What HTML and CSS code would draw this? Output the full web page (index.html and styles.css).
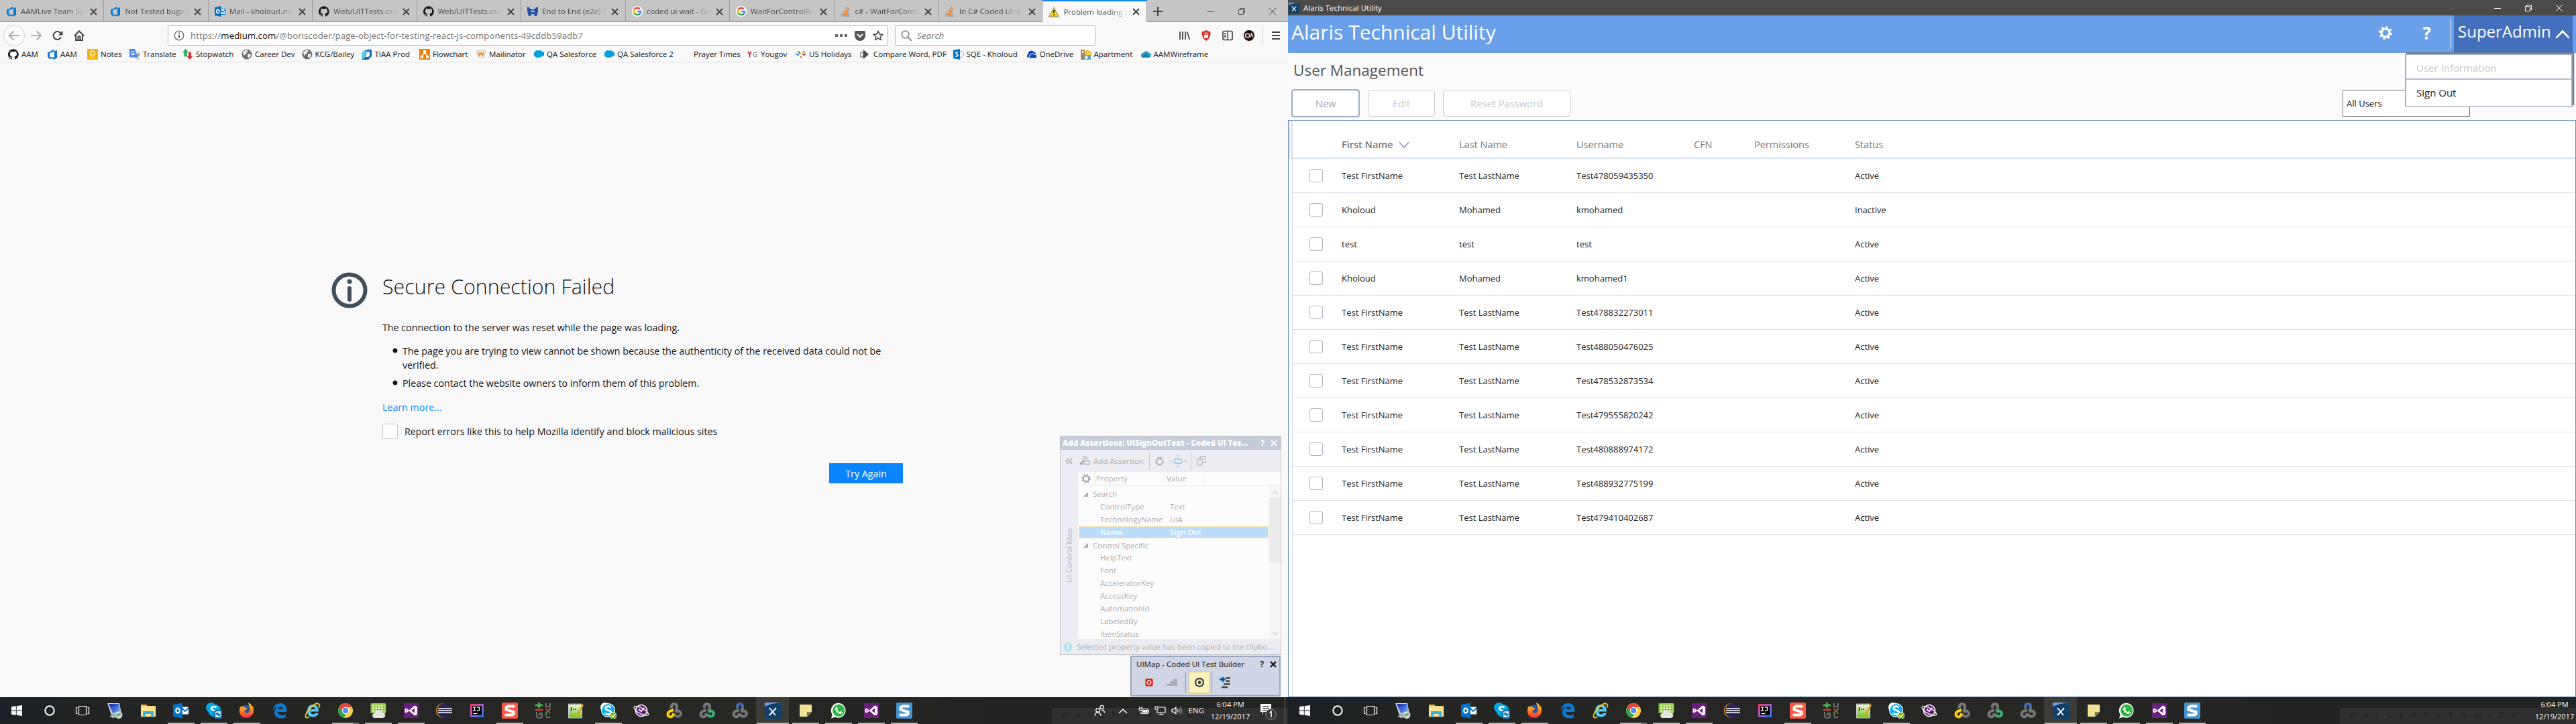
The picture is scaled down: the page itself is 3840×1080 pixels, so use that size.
FILE: index.html
```html
<!DOCTYPE html>
<html lang="en">
<head>
<meta charset="utf-8">
<title>Desktop</title>
<link rel="stylesheet" href="styles.css">
</head>
<body>
<svg class="defs" width="0" height="0">
  <defs>
    <linearGradient id="ff" x1="0" y1="0" x2="0" y2="1"><stop offset="0" stop-color="#ffdf3a"/><stop offset=".5" stop-color="#ff8a16"/><stop offset="1" stop-color="#f0244c"/></linearGradient>
    <linearGradient id="ij" x1="0" y1="0" x2="1" y2="1"><stop offset="0" stop-color="#fe2d6b"/><stop offset=".5" stop-color="#a05bd0"/><stop offset="1" stop-color="#087cfa"/></linearGradient>
    <linearGradient id="scr" x1="0" y1="0" x2="1" y2="1"><stop offset="0" stop-color="#0b25a8"/><stop offset="1" stop-color="#7db5ff"/></linearGradient>
    <linearGradient id="grn" x1="0" y1="0" x2="0" y2="1"><stop offset="0" stop-color="#f7fbe8"/><stop offset="1" stop-color="#6fbf1a"/></linearGradient>
    <!-- 16px icons -->
    <symbol id="vsts" viewBox="0 0 16 16"><path fill="#0a78d4" d="M1 5 4 4.500 10 .5V3l5-1v11.500L11 15.500 5 14l0 2L1 12V5zM4 6v6l7 1V3.500L6 5.500z"/></symbol>
    <symbol id="outlook" viewBox="0 0 16 16"><path fill="#fff" stroke="#0072c6" d="M8 4.500h7.500v8H8z"/><path fill="none" stroke="#0072c6" stroke-width="1.300" d="m8.500 5.500 3.500 4 3.500-4"/><path fill="#0072c6" d="M0 2 9.500 0v16L0 14z"/><ellipse cx="4.700" cy="8" rx="2" ry="2.600" fill="none" stroke="#fff" stroke-width="1.500"/></symbol>
    <symbol id="github" viewBox="0 0 16 16"><path fill="#191717" d="M8 .2a8 8 0 0 0-2.500 15.600c.4 0 .5-.2.500-.4v-1.500c-2.200.5-2.700-1-2.700-1-.4-.9-.9-1.200-.9-1.200-.7-.5 0-.5 0-.5.8.1 1.200.8 1.200.8.7 1.300 1.900.9 2.400.7 0-.5.3-.9.500-1.100-1.800-.2-3.600-.9-3.600-4 0-.9.300-1.600.8-2.100-.1-.2-.4-1 .1-2.100 0 0 .7-.2 2.200.8a7.700 7.700 0 0 1 4 0c1.500-1 2.200-.8 2.200-.8.4 1.100.2 1.900.1 2.100.5.6.8 1.300.8 2.100 0 3.100-1.900 3.700-3.700 4 .3.200.6.700.6 1.500v2.200c0 .2.100.5.500.4A8 8 0 0 0 8 .2z"/></symbol>
    <symbol id="moth" viewBox="0 0 16 16"><path fill="#2d55a8" d="M0 1 3 2l2.500 3h5L13 2l3-1v7l-2 7h-3l-1.500-3h-3L5 15H2L0 8z"/><path fill="#9dc0f0" d="m6 6 2 2 2-2 1 3H5z"/><path fill="#24356b" d="M2 5h2v3H2zm10 0h2v3h-2z"/></symbol>
    <symbol id="google" viewBox="0 0 16 16"><circle cx="8" cy="8" r="8" fill="#fff"/><g fill="none" stroke-width="2.600"><path stroke="#ea4335" d="M3.600 5.500A5 5 0 0 1 11.700 4.500"/><path stroke="#fbbc05" d="M3.600 10.500a5 5 0 0 1 0-5"/><path stroke="#34a853" d="M3.600 10.500a5 5 0 0 0 7.900 1.100"/><path stroke="#4285f4" d="M8 8h5a5 5 0 0 1-1.600 3.700"/></g></symbol>
    <symbol id="so" viewBox="0 0 16 16"><path fill="none" stroke="#9a9a9a" stroke-width="1.300" d="M2 10v5h10v-5"/><path stroke="#f48024" stroke-width="1.500" d="M4 12.700h6.200M4.200 10.300l6.100.7M5 7.500l5.700 2M6.800 4.600l4.800 3.700M9.500 1.500l3.200 5"/></symbol>
    <symbol id="warn" viewBox="0 0 16 16"><path fill="#f7d61c" stroke="#77797c" d="M8 1 15.300 15H.7z" stroke-linejoin="round"/><path fill="#222" d="M7 5h2l-.4 5H7.400zM7.100 11.500h1.800v1.800H7.100z"/></symbol>
    <symbol id="notes" viewBox="0 0 16 16"><path fill="#f5b50f" d="M0 0h16v16H0z"/><path fill="none" stroke="#fff" stroke-width="1.200" d="M6.500 10.500V9.300a3.400 3.400 0 1 1 3 0v1.200zM6.500 12.500h3"/></symbol>
    <symbol id="translate" viewBox="0 0 16 16"><path fill="#dcdcdc" d="M6 4h10v12H9z"/><path fill="#4b86f0" d="M0 0h8l4 12.500H0z"/><path fill="none" stroke="#fff" stroke-width="1.200" d="M7 4.500a2.500 2.500 0 1 0 .5 2H5"/><path stroke="#667" d="M10 8h5m-4 5 3-5"/></symbol>
    <symbol id="stopwatch" viewBox="0 0 16 16"><path fill="#23c552" stroke="#16873a" stroke-width=".5" d="m4.500 0 4 5H6.500v6h-4V5H.5z"/><path fill="#e02b3c" d="M9 5h4v6h2.500L11 16l-4.500-5H9z"/></symbol>
    <symbol id="globe" viewBox="0 0 16 16"><circle cx="8" cy="8" r="7.500" fill="#6b6b6b"/><path fill="#f2f2f2" d="M2 6c2-4 5-5 7-4l1 2-3 1 1 2-3 1-1 3zM9 8l4-1 1 3-3 4-2-2zM12 3l2 2h-2z"/></symbol>
    <symbol id="tiaa" viewBox="0 0 16 16"><path fill="#0b66b5" d="M5 1h10v10l-5 5H0l5-4z"/><path fill="#62c4ec" d="M5 1h3L5 13l-5 3V6z"/><path fill="#fff" d="M8 4h4v6l-2 2H6z"/></symbol>
    <symbol id="flow" viewBox="0 0 16 16"><path fill="#ee8109" d="M0 0h16v16H0z"/><path stroke="#fff" stroke-width="1.400" d="m8 5-4 6m4-6 4 6"/><path fill="#fff" d="M6 2h4v4H6zM2 10h4v4H2zm8 0h4v4h-4z"/></symbol>
    <symbol id="mailin" viewBox="0 0 16 16"><path fill="#fff" stroke="#c5ccd5" d="M1.500 2.500h13L13 13H3z"/><path fill="none" stroke="#e68a2e" stroke-width="2" d="m4 4 1.500 6L8 6l2.500 4L12 4"/></symbol>
    <symbol id="sf" viewBox="0 0 16 16"><path fill="#0aa0dd" d="M3 4a3 3 0 0 1 5-1 3 3 0 0 1 5 1 3.500 3.500 0 0 1 0 7 3 3 0 0 1-4 1 3 3 0 0 1-5 0A3 3 0 0 1 1 8a3 3 0 0 1 2-4z"/></symbol>
    <symbol id="blank" viewBox="0 0 16 16"></symbol>
    <symbol id="yg" viewBox="0 0 16 16"><path fill="#fff" d="M0 0h16v16H0z"/><path fill="none" stroke="#d8222c" stroke-width="1.800" d="m1 4 2.500 4L6 4M3.500 8v4.500"/><path fill="none" stroke="#9a9a9a" stroke-width="1.500" d="M14 5.500A3 3.500 0 1 0 14 11V8.500h-2"/></symbol>
    <symbol id="hol" viewBox="0 0 16 16"><path fill="#fff" d="M0 0h16v16H0z"/><g stroke-width="2.400" stroke-linecap="round"><path stroke="#e2483d" d="m8 12 .1 0M12 4l.1.100"/><path stroke="#f4b321" d="m9.500 7.500 3.500-3"/><path stroke="#4cae4f" d="m6.500 7-2-3"/><path stroke="#3a8de0" d="M1.500 7.500 4 9"/><path stroke="#8b49b5" d="m12 9 2-1"/></g></symbol>
    <symbol id="cmp" viewBox="0 0 16 16"><path fill="#4a4a4a" d="M5 1l8 7-8 7z"/><path fill="#fff" stroke="#4a4a4a" d="M1 5h4v7H1z"/></symbol>
    <symbol id="sp" viewBox="0 0 16 16"><circle cx="11" cy="8" r="4.500" fill="none" stroke="#6fb1e4"/><path fill="#0072c6" d="M0 2 10 0v16L0 14z"/><path fill="none" stroke="#fff" stroke-width="1.500" d="M7 5.500C5 4.500 3.500 5.500 4 6.800s3 1.300 3 2.700-2 2-3.800 1"/></symbol>
    <symbol id="od" viewBox="0 0 16 16"><path fill="#094ab2" d="M2 13a3 3 0 0 1 .5-5A5 5 0 0 1 11 4a4 4 0 0 1 3 4 3 3 0 0 1-1 5.500z"/><path stroke="#fff" fill="#094ab2" d="M6.500 14a2.500 2.500 0 0 1-.2-5 3.200 3.200 0 0 1 6-.5 2.800 2.800 0 0 1 1.200 5.500z"/></symbol>
    <symbol id="apt" viewBox="0 0 16 16"><path fill="#a8895b" d="M0 1h6v15H0z"/><path fill="#f2c230" d="M6 4l4-3 6 4v5H6z"/><path fill="#56acc4" d="M5 9h10v7H5z"/><path fill="#fff" d="M2 3h2v3H2zm5 7h3v5H7zm5-4h2v2h-2z"/></symbol>
    <symbol id="wire" viewBox="0 0 16 16"><path fill="#2fa3b8" d="M1 9a3 3 0 0 1 3-3 5 5 0 0 1 9 0 3.500 3.500 0 0 1-1 7H4a3.500 3.500 0 0 1-3-4z"/><path fill="#1b7cab" d="M2 12 8 6l6 6z"/></symbol>
    <symbol id="gear" viewBox="0 0 20 20"><g fill="none" stroke="currentColor"><circle cx="10" cy="10" r="6" stroke-width="3.200"/><circle cx="10" cy="10" r="8.600" stroke-width="2.600" stroke-dasharray="3.300 3.454"/></g></symbol>
    <symbol id="target" viewBox="0 0 16 16"><circle cx="8" cy="8" r="6" fill="none" stroke="#424242" stroke-width="2.300"/><circle cx="8" cy="8" r="2.400" fill="#424242"/></symbol>
    <!-- taskbar icons -->
    <symbol id="t-win" viewBox="0 0 24 24"><path fill="#fff" d="m4 6.300 6.800-1v6.200H4zM11.700 5.200 20 4v7.500h-8.300zM4 12.400h6.800v6.300L4 17.700zm7.700 0H20V20l-8.300-1.200z"/></symbol>
    <symbol id="t-cort" viewBox="0 0 24 24"><circle cx="12" cy="12" r="6.700" fill="none" stroke="#fff" stroke-width="2"/></symbol>
    <symbol id="t-view" viewBox="0 0 24 24"><path fill="none" stroke="#fff" stroke-width="1.200" d="M6.500 5.500h11v13h-11zM4.500 7.500h-2v9h2M19.500 7.500h2v9h-2"/></symbol>
    <symbol id="t-rdp" viewBox="0 0 24 24"><path fill="#d5d9df" d="M0 1h18l3 16-15 1z"/><path fill="url(#scr)" d="m2 2 15 0 2.500 13-11.500 1z"/><path fill="#bfc3c8" d="M3 20l7-2 3 4-5 1z"/><circle cx="17" cy="18.500" r="5.500" fill="#d7d9da"/><path fill="none" stroke="#3ca03c" stroke-width="1.400" d="m13.500 17 3 2-2 2.500m5.500-6-3 2 3 2"/></symbol>
    <symbol id="t-exp" viewBox="0 0 24 24"><path fill="#e9b64d" d="M1 3h8l2 2h12v5H1z"/><path fill="#ffe391" d="M1 5.500h22V21H1z"/><path fill="#36b0e8" d="M4 13h16v9h-4v-5H8v5H4z"/></symbol>
    <symbol id="t-out" viewBox="0 0 24 24"><path fill="#fff" d="M13 6.500h10v11H13z"/><path fill="none" stroke="#0072c6" stroke-width="1.800" d="m13 8 5 5 5.500-5.500"/><path fill="#0072c6" d="M0 3 14 .5v23L0 21z"/><ellipse cx="7" cy="12" rx="2.800" ry="3.500" fill="none" stroke="#fff" stroke-width="2.100"/></symbol>
    <symbol id="t-skb" viewBox="0 0 24 24"><circle cx="7.500" cy="7.500" r="7.500" fill="#00a8e8"/><circle cx="13" cy="12" r="9.500" fill="#00a8e8"/><path fill="none" stroke="#fff" stroke-width="2.600" d="M15.500 7.500C13 5 8 6 8 9s8 2.500 8 6"/><circle cx="18" cy="17.500" r="7.500" fill="#0d7ab8"/><path fill="none" stroke="#fff" stroke-width="1.400" d="M14 16.500c1-3 5-4 7-1V13m0 2.500h-3M22 18.500c-1 3-5 4-7 1V22m0-2.500h3"/></symbol>
    <symbol id="t-ff" viewBox="0 0 24 24"><circle cx="12" cy="12.500" r="9" fill="#2756a8"/><path fill="url(#ff)" d="M3 5 5 7l2-3 1 3 4 1-1 3-3 1 1 3c3 2 6 0 7-2 2-5-1-8-2-13 4 2 5 4 5.500 6l1.500-1c3 8 0 18-10 18C2 23-2 13 3 5z"/></symbol>
    <symbol id="t-edge" viewBox="0 0 24 24"><path fill="#0a78d7" d="M1.500 11C3 4 8 1 13 1c6 0 9.500 5 9.500 10v3H9c0 5 7 6.500 12 3.500V22c-7 3.500-17 1-17-8 0-4 3-7 6-8-3 0-6 1.500-8.500 5zM9.300 10h7.200c0-5-6.500-5-7.200 0z"/></symbol>
    <symbol id="t-ie" viewBox="0 0 24 24"><path fill="#55c7f5" d="M12 3c6 0 9 4 9 10.500H9c0 4.500 6 5 7.300 2.200H21c-3 8.500-17 8-17-3C4 7 7 3 12 3zM9 10h7.200C16 6 9.300 6 9 10z"/><path fill="none" stroke="#f5c518" stroke-width="1.900" d="M7 21c-4 3-6.500 2-5-3C4 11 16-1 21 2c2 1 1.500 3.500.5 5.500"/></symbol>
    <symbol id="t-chr" viewBox="0 0 24 24"><circle cx="12" cy="12" r="11" fill="#fcd04b"/><path fill="#df4a3c" d="M2.500 6.500A11 11 0 0 1 21.800 7H12l-5 7z"/><path fill="#2ba24c" d="M2.500 6.500 8 15.500l4 1.500-2 5.900A11 11 0 0 1 2.500 6.500z"/><circle cx="12" cy="12" r="5.200" fill="#fff"/><circle cx="12" cy="12" r="4.100" fill="#4a8af4"/></symbol>
    <symbol id="t-cloud" viewBox="0 0 24 24"><rect x=".5" y="1" width="23" height="15" rx="1.500" fill="#8cc63f"/><path stroke="#f4fbe4" stroke-width="2.600" stroke-dasharray="2.700 1.500" d="M3.300 4.500h18M3.300 8.500h18M3.300 12.500h18"/><path fill="#e6e6e6" d="M7 23a3.500 3.500 0 0 1-.5-7 5.500 5.500 0 0 1 10.500-1 4 4 0 0 1 2 8z"/></symbol>
    <symbol id="t-vs" viewBox="0 0 24 24"><path fill="#68217a" d="M1 1h22v22H1z"/><path fill="#fff" d="M17 4.500 9 11.500 4.500 8.500 2.500 9.500v5l2 1 4.500-3 8 7 4-2v-11zM4.500 10.500 6.500 12l-2 1.800zM17 8.500v7L12 12z"/></symbol>
    <symbol id="t-ecl" viewBox="0 0 24 24"><circle cx="11" cy="12" r="11" fill="#f7941e"/><circle cx="12.500" cy="12" r="11" fill="#262626"/><circle cx="13.500" cy="12" r="10.500" fill="#2c2255"/><path stroke="#fff" stroke-width="1.600" d="M3 9h21M3 12h21M3 15h21"/></symbol>
    <symbol id="t-ij" viewBox="0 0 24 24"><path fill="url(#ij)" d="M2 2h20v20H2z"/><path fill="#000" d="M5 5h14v14H5z"/><path fill="none" stroke="#fff" stroke-width="1.300" d="M6.500 7h3.500m-1.750 0v5M6.500 12h3.500M12 7h3.500v4c0 1.500-2 1.700-3.500.6M6.500 16.500h6"/></symbol>
    <symbol id="t-snag" viewBox="0 0 24 24"><rect width="24" height="24" rx="2" fill="#ff5545"/><path fill="none" stroke="#fff" stroke-width="4" d="M19.500 5.500H9l-2.500 2v3L17.500 14v3L15 18.500H4.500"/></symbol>
    <symbol id="t-snagb" viewBox="0 0 24 24"><rect width="24" height="24" rx="2" fill="#4595d1"/><path fill="none" stroke="#fff" stroke-width="4" d="M19.500 5.500H9l-2.500 2v3L17.500 14v3L15 18.500H4.500"/></symbol>
    <symbol id="t-git" viewBox="0 0 24 24"><path stroke="#4caf50" stroke-width="3" d="M6.500 0v8M1 4h11"/><path stroke="#d23c32" stroke-width="2.400" d="M1 11h11"/><path fill="none" stroke="#727272" stroke-width="2" d="M3 14v6c0 4 8 4 8 0v-4H7v4M17 1v5h6V1m-6 21h6m-6-7v5"/><path fill="none" stroke="#4caf50" stroke-width="1.600" d="M17 17c0-5 6-4 6-9"/><path fill="none" stroke="#d23c32" stroke-width="1.600" d="M17 8c0 5 6 4 6 9"/></symbol>
    <symbol id="t-np" viewBox="0 0 24 24"><path fill="url(#grn)" stroke="#ccc" d="M1.500 2h20v21h-20z"/><path stroke="#555" stroke-width="1.800" stroke-dasharray="1.200 1" d="M2 2h20"/><path stroke="#222" stroke-width="1.500" d="M5.500 7v6M8 10h2m1 0h2"/><path stroke="#e89a1c" stroke-width="2.600" d="M23 3 15 18"/></symbol>
    <symbol id="t-sky" viewBox="0 0 24 24"><circle cx="7" cy="7" r="7" fill="#fff"/><circle cx="11.500" cy="11.500" r="10.500" fill="#fff"/><circle cx="11.500" cy="11.500" r="9.300" fill="#00aff0"/><path fill="none" stroke="#fff" stroke-width="2.800" d="M15.500 7.500C13 4.500 7.500 5.500 7.500 8.700s8.200 2.300 8.200 6-6.500 4-8.700.8"/><circle cx="19" cy="19.500" r="5" fill="#76b900" stroke="#fff"/><path fill="none" stroke="#fff" stroke-width="1.500" d="m16.500 19.500 2 2 3-4"/></symbol>
    <symbol id="t-purple" viewBox="0 0 24 24"><circle cx="12" cy="12" r="8.500" fill="#68217a" stroke="#fff" stroke-width="1.600"/><ellipse cx="12" cy="12.500" rx="12" ry="4.200" fill="none" stroke="#fff" stroke-width="1.300" transform="rotate(28 12 12)"/><path fill="none" stroke="#fff" stroke-width="1.700" d="m8 10 4 3 4-5"/></symbol>
    <symbol id="t-link" viewBox="0 0 24 24"><g fill="none" stroke-width="4"><path stroke="#777" d="M8 8.500V6a4 4 0 0 1 8 0v2.500a4 4 0 0 1-3 3.500"/><path stroke="var(--r,#777)" d="M14 14.500 16 13a4 4 0 0 1 5 6c-2 2.500-5 2-6.500 1L12 18"/><path stroke="var(--l,#777)" d="M11 11 8 12c-3 1-5.500 2.500-5.500 5.500 0 4 5 5 7 2.500l2-4"/><path stroke="var(--t,#777)" d="M8 7.500V6a4 4 0 0 1 8 0v3"/></g></symbol>
    <symbol id="t-alaris" viewBox="0 0 24 24"><path fill="#103f6b" d="M0 0h24v24H0z"/><path fill="#6aa0ea" d="M0 0h24C14 1 6 3 0 6z"/><path stroke="#fff" stroke-width="1.900" d="m7 8 9 11m1-11L7 19"/></symbol>
    <symbol id="t-note" viewBox="0 0 24 24"><path fill="#f1e498" d="M3 3h18v11l-7 7H3z"/><path fill="#857c4b" d="M21 14h-7v7z"/></symbol>
    <symbol id="t-wa" viewBox="0 0 24 24"><path fill="#f3f3f3" d="M12 .8a11 11 0 1 1-5 21L1 23.500 2.700 18A11 11 0 0 1 12 .8z"/><circle cx="12.200" cy="11.800" r="9" fill="#2cb742"/><path fill="#fff" d="M8.500 6.500 10 7l1 2.500-1 1.200c1 1.800 2 2.700 3.700 3.500l1.300-1.400 2.700 1.400c0 2.500-2.500 3-4 2.500-3-1-6-4-6.500-6.500-.2-1.500.3-2.700 1.300-3.700z"/></symbol>
  </defs>
</svg>

<section class="monitor">
  <div class="browser">
    <div class="tabstrip">
      <div class="tabs" id="tabs"></div>
      <div class="plus"><svg width="16" height="16"><path stroke="#444" stroke-width="2" d="M8 1v14M1 8h14"/></svg></div>
      <div class="winctl dark"><svg width="12" height="12"><path stroke="#555" d="M1 6.500h10"/></svg><svg width="12" height="12"><path fill="none" stroke="#555" d="M1.500 3.500h7v7h-7zM3.500 3V1.500h7v7H9"/></svg><svg width="12" height="12"><path stroke="#555" d="m1 1 10 10M11 1 1 11"/></svg></div>
    </div>
    <div class="navbar">
      <div class="navbtns">
        <svg width="34" height="34" viewBox="0 0 34 34"><circle cx="17" cy="17" r="15.500" fill="#fbfbfb" stroke="#d0d0d0"/><path fill="none" stroke="#aaa" stroke-width="2" d="M25 17H10m6.500-6.500L10 17l6.500 6.500"/></svg>
        <svg width="16" height="16"><path fill="none" stroke="#aaa" stroke-width="2" d="M0 8h15M8.500 1.500 15 8l-6.500 6.500"/></svg>
        <svg width="16" height="16"><path fill="none" stroke="#444" stroke-width="2" d="M13 10.500A6 6 0 1 1 12.500 4.500"/><path fill="#444" d="M15.500 1v6.500H9z"/></svg>
        <svg width="16" height="16"><path fill="none" stroke="#444" stroke-width="2" d="M.8 8.500 8 1.500l7.200 7M3 7v8h10V7M6.500 15V9.500h3V15"/></svg>
      </div>
      <div class="urlbar">
        <svg width="16" height="16"><circle cx="8" cy="8" r="6.800" fill="none" stroke="#666" stroke-width="1.300"/><path stroke="#666" stroke-width="2" d="M8 7v5M8 3.500v2"/></svg>
        <span class="url m">https://<b>medium.com</b>/@boriscoder/page-object-for-testing-react-js-components-49cddb59adb7</span>
        <svg width="18" height="4"><path fill="#666" d="M0 0h4v4H0zM7 0h4v4H7zM14 0h4v4h-4z"/></svg>
        <svg width="16" height="15"><path fill="#555" d="M2 0h12a2 2 0 0 1 2 2v5a8 8 0 0 1-16 0V2a2 2 0 0 1 2-2z"/><path fill="none" stroke="#fff" stroke-width="2" stroke-linecap="round" d="m4.500 5.500 3.500 3.500 3.500-3.500"/></svg>
        <svg width="16" height="16"><path fill="none" stroke="#555" stroke-width="1.700" stroke-linejoin="round" d="m8 1.200 2 4.600 5 .5-3.800 3.300 1.200 5L8 12l-4.400 2.600 1.200-5L1 6.300l5-.5z"/></svg>
      </div>
      <div class="searchbar"><svg width="17" height="17"><circle cx="6.500" cy="6.500" r="5.200" fill="none" stroke="#999" stroke-width="2"/><path stroke="#999" stroke-width="2.400" d="m10.500 10.500 5.500 5.500"/></svg><i class="m">Search</i></div>
      <div class="toolicons">
        <svg width="16" height="16"><path stroke="#444" stroke-width="1.800" d="M1 2v12M5 2v12M9 2v12M11.500 2.500 15.500 14"/></svg>
        <svg width="16" height="16"><path fill="#d9392e" d="m8 0 6.500 2.500C15 9 12 14 8 16 4 14 1 9 1.500 2.500z"/><path fill="#fff" d="M5 7h1V5.500a2 2 0 0 1 4 0V7h1v4.500H5zm2 0h2V5.500c0-1-2-1-2 0z"/></svg>
        <svg width="16" height="16"><rect x="1" y="1.500" width="14" height="13" rx="2" fill="none" stroke="#444" stroke-width="1.700"/><path stroke="#444" stroke-width="1.400" d="M8 2v12M3 5h3M3 7.500h3M3 10h3"/></svg>
        <svg width="16" height="16"><circle cx="8" cy="8" r="8" fill="#1a0c0c"/><circle cx="5.500" cy="8" r="3" fill="none" stroke="#f3d8d8" stroke-width="1.500"/><path fill="none" stroke="#f3d8d8" stroke-width="1.300" d="m10 11 2-6 2 6M10 5l3 3"/></svg>
        <svg class="burger" width="30" height="32"><path stroke="#d8d8d8" d="M.5 0v32"/><path stroke="#444" stroke-width="2" d="M15 11h12M15 16h12M15 21h12"/></svg>
      </div>
    </div>
    <div class="bookmarks" id="bookmarks"></div>
    <main class="page">
      <svg class="info" width="54" height="54" viewBox="0 0 54 54"><circle cx="27" cy="27" r="23.500" fill="none" stroke="#424f5a" stroke-width="6"/><path stroke="#424f5a" stroke-width="6" stroke-linecap="round" d="M27 24v17"/><circle cx="27" cy="14" r="3.500" fill="#424f5a"/></svg>
      <div class="error">
        <h1><span class="m">Secure Connection Failed</span></h1>
        <p><span class="m">The connection to the server was reset while the page was loading.</span></p>
        <ul>
          <li><span class="m">The page you are trying to view cannot be shown because the authenticity of the received data could not be</span><br>verified.</li>
          <li><span class="m">Please contact the website owners to inform them of this problem.</span></li>
        </ul>
        <a class="learn"><span class="m">Learn more...</span></a>
        <label class="report"><i></i><span class="m">Report errors like this to help Mozilla identify and block malicious sites</span></label>
        <button class="again"><span class="m">Try Again</span></button>
      </div>
    </main>
  </div>

  <div class="assert">
    <header><b class="m">Add Assertions: UISignOutText - Coded UI Tes...</b><b class="q">?</b><svg width="10" height="10"><path stroke="#fff" stroke-width="1.800" d="m1 1 8 8M9 1 1 9"/></svg></header>
    <div class="atools">
      <svg width="11" height="10"><path fill="none" stroke="#aaa" stroke-width="1.600" d="M5 1 1.500 5 5 9M10 1 6.500 5 10 9"/></svg>
      <svg class="chk" width="16" height="15"><path fill="none" stroke="#b0b0b3" stroke-width="1.300" d="M5 1.500h6M5 4h8M7 7.500h8v5H7z"/><path fill="none" stroke="#a5a5a8" stroke-width="2" d="m1 10 2 3 3-7"/></svg>
      <span class="m">Add Assertion</span><i class="sep"></i>
      <svg width="14" height="14"><path fill="none" stroke="#b5b5b8" stroke-width="2.400" d="M11.500 6A5 5 0 1 1 8 2.500"/><path fill="#b5b5b8" d="M7 0l5 3-4 3z"/></svg>
      <svg class="mv" width="28" height="22"><path fill="none" stroke="#8cc7ea" stroke-width="1.400" d="M9 8h10v6H9z"/><path fill="#dadade" d="m14 0 4 4h-3v2h-2V4h-3zM14 22l4-4h-3v-2h-2v2h-3zM0 11l4-4v3h3v2H4v3zM28 11l-4-4v3h-3v2h3v3z"/></svg><i class="sep"></i>
      <svg width="14" height="15"><path fill="none" stroke="#b8b8bc" stroke-width="1.300" d="M1 5h7v9H1zM5 5V1h8v9H8"/></svg>
    </div>
    <div class="abody">
      <div class="side"><span>UI Control Map</span></div>
      <div class="grid">
        <div class="ghead"><span class="gi"><svg width="14" height="14" color="#aaaab2"><use href="#gear"/></svg></span><span class="gp">Property</span><span class="gv">Value</span></div>
        <div class="gbody">
          <div class="grows">
            <div class="cat"><i></i>Search</div>
            <div><span>ControlType</span><span>Text</span></div>
            <div><span>TechnologyName</span><span>UIA</span></div>
            <div class="sel"><span>Name</span><span>Sign Out</span></div>
            <div class="cat"><i></i>Control Specific</div>
            <div><span>HelpText</span></div><div><span>Font</span></div><div><span>AcceleratorKey</span></div><div><span>AccessKey</span></div><div><span>AutomationId</span></div><div><span>LabeledBy</span></div><div><span>ItemStatus</span></div>
          </div>
          <div class="scroll"><svg width="8" height="6"><path fill="none" stroke="#ccc" stroke-width="1.300" d="m.5 5 3.500-4 3.500 4"/></svg><i></i><svg width="8" height="6"><path fill="none" stroke="#ccc" stroke-width="1.300" d="m.5 1 3.500 4 3.500-4"/></svg></div>
        </div>
      </div>
    </div>
    <footer><svg width="14" height="14"><circle cx="7" cy="7" r="6.500" fill="#b4dff3"/><path stroke="#fff" stroke-width="1.800" d="M7 6v5M7 3v2"/></svg><span class="m">Selected property value has been copied to the clipbo...</span></footer>
  </div>

  <div class="builder">
    <header><span class="m">UIMap - Coded UI Test Builder</span><b>?</b><svg width="10" height="10"><path stroke="#111" stroke-width="2.200" d="m1 1 8 8M9 1 1 9"/></svg></header>
    <div class="btools">
      <svg width="12" height="12"><rect x=".5" y=".5" width="11" height="11" rx="1.500" fill="#e51400"/><circle cx="6" cy="6" r="2.800" fill="none" stroke="#fff" stroke-width="1.500"/></svg>
      <svg class="steps" width="16" height="12"><path fill="#a9adb6" d="M0 8h5V4h5V1h6v10H0z"/></svg>
      <i class="sep"></i><span class="on"><svg width="16" height="16"><use href="#target"/></svg></span><i class="sep"></i>
      <svg class="gen" width="18" height="18"><path fill="#00539c" d="M1 3h4V0l5 4.500L5 9V6H1z"/><path stroke="#424242" stroke-width="2.600" d="M10 2.500h7M10 7h6M7 11.500h10M4 16h9"/></svg>
    </div>
  </div>
  <div class="taskbar" data-tray="full"></div>
</section>

<section class="monitor">
  <div class="app">
    <div class="apptitle"><svg width="16" height="16"><use href="#t-alaris"/></svg><span class="m">Alaris Technical Utility</span>
      <div class="winctl"><svg width="12" height="12"><path stroke="#fff" d="M1 6.500h10"/></svg><svg width="12" height="12"><path fill="none" stroke="#fff" d="M1.500 3.500h7v7h-7zM3.500 3V1.500h7v7H9"/></svg><svg width="12" height="12"><path stroke="#fff" d="m1 1 10 10M11 1 1 11"/></svg></div>
    </div>
    <div class="apphead"><h1><span class="m">Alaris Technical Utility</span></h1>
      <div class="right"><svg width="20" height="20"><use href="#gear"/></svg><b class="help">?</b><i class="bar"></i><div class="user"><span class="m">SuperAdmin</span><svg width="22" height="14"><path fill="none" stroke="#fff" stroke-width="2.600" d="m1.500 12.500 9.500-10 9.500 10"/></svg></div></div>
    </div>
    <h2><span class="m">User Management</span></h2>
    <div class="actions"><button class="new"><span class="m">New</span></button><button class="edit">Edit</button><button class="reset"><span class="m">Reset Password</span></button><div class="filter"><span class="m">All Users</span></div></div>
    <div class="users"><div class="gutter"></div><div class="rows" id="rows">
      <div class="row hd"><span></span><b><span class="m">First Name</span><svg width="16" height="10"><path fill="none" stroke="#8ea0b8" stroke-width="1.800" d="m1 1 7 8 7-8"/></svg></b><span>Last Name</span><span>Username</span><span>CFN</span><span>Permissions</span><span>Status</span></div>
    </div></div>
  </div>
  <div class="menu"><div class="off"><span class="m">User Information</span></div><div><span class="m">Sign Out</span></div></div>
  <div class="taskbar second" data-tray="clock"></div>
</section>
<script src="app.js"></script>
</body>
</html>
```
FILE: app.js
```js
const icon = (id, size) => `<svg width="${size}" height="${size}"><use href="#${id}"/></svg>`;

const tabs = [['vsts','AAMLive Team Space'],['vsts','Not Tested bugs task'],['outlook','Mail - kholoud.mohamed'],['github','Web/UITTests.cs at'],['github','Web/UITTests.cs at'],['moth','End to End (e2e) Test'],['google','coded ui wait - Google'],['google','WaitForControlReady'],['so','c# - WaitForControl'],['so','In C# Coded UI is there'],['warn','Problem loading page']];
document.getElementById('tabs').innerHTML = tabs.map(([i, t], n) =>
  `<div class="tab${n === 10 ? ' current' : ''}">${icon(i, 16)}<span class="label"><span class="m">${t}</span></span><svg width="11" height="11"><path stroke="#444" stroke-width="2" d="m1 1 9 9M10 1 1 10"/></svg></div>`).join('');

const marks = [['github','AAM'],['vsts','AAM'],['notes','Notes'],['translate','Translate'],['stopwatch','Stopwatch'],['globe','Career Dev'],['globe','KCG/Bailey'],['tiaa','TIAA Prod'],['flow','Flowchart'],['mailin','Mailinator'],['sf','QA Salesforce'],['sf','QA Salesforce 2'],['blank','Prayer Times'],['yg','Yougov'],['hol','US Holidays'],['cmp','Compare Word, PDF'],['sp','SQE - Kholoud'],['od','OneDrive'],['apt','Apartment'],['wire','AAMWireframe']];
document.getElementById('bookmarks').innerHTML = marks.map(([i, t]) => `<div>${icon(i, 16)}<span class="m">${t}</span></div>`).join('');

const T = 'Test FirstName', L = 'Test LastName';
const users = [[T,L,'Test478059435350'],['Kholoud','Mohamed','kmohamed','Inactive'],['test','test','test'],['Kholoud','Mohamed','kmohamed1'],[T,L,'Test478832273011'],[T,L,'Test488050476025'],[T,L,'Test478532873534'],[T,L,'Test479555820242'],[T,L,'Test480888974172'],[T,L,'Test488932775199'],[T,L,'Test479410402687']];
document.getElementById('rows').insertAdjacentHTML('beforeend', users.map(([f, l, u, s = 'Active']) =>
  `<div class="row"><i class="box"></i><span>${f}</span><span>${l}</span><span>${u}</span><span></span><span></span><span>${s}</span></div>`).join(''));

const apps = ['win','cort','view','rdp','exp','out run','skb run','ff run','edge','ie','chr run many','cloud run','vs run','ecl','ij','snag run','git','np','sky run','purple','link l1','link l2','link l3','alaris run active','note run','wa run','vs run','snagb run'];
const clock = '<div class="clock"><span>6:04 PM</span><span class="m">12/19/2017</span></div>';
const tray = `<div class="tray">
<svg class="people" width="16" height="18"><g fill="none" stroke="#fff" stroke-width="1.300"><circle cx="5.500" cy="8.500" r="2.800"/><path d="M1 17c0-7 9-7 9 0"/><circle cx="11.500" cy="4" r="2.600"/><path d="M10.500 8.500c3-1 5 1 5 4"/></g></svg>
<svg class="up" width="14" height="9"><path fill="none" stroke="#fff" stroke-width="1.500" d="m1 8 6-6 6 6"/></svg>
<svg class="bat" width="16" height="13"><path fill="none" stroke="#fff" stroke-width="1.200" d="M6 3.500h8v7H4V8M2 0v3M5 0v3M1 3h5v2L3.500 6.500 1 5zM15.500 5v4"/><path fill="#fff" d="M6 5h7v4H6z"/></svg>
<svg class="net" width="17" height="14"><path fill="none" stroke="#fff" stroke-width="1.200" d="M6 2h10v8H4V6M10 10v3M6 13h8M1 1h4v4H1z"/></svg>
<svg class="vol" width="17" height="14"><path fill="none" stroke="#fff" stroke-width="1.200" d="M1 5h2.500L7 2v10L3.500 9H1zM9.500 5q1.500 2 0 4"/><path fill="none" stroke="#999" stroke-width="1.200" d="M11.500 3q3 4 0 8M13.500 1.500q4 5.500 0 11"/></svg>
<span class="lang m">ENG</span>${clock}
<svg class="note" width="26" height="26"><path fill="#fff" d="M1 1h16v12H5l0 4-2-4H1z"/><path stroke="#222" stroke-width="1.200" d="M4 4.500h10M4 7.500h10M4 10.500h6"/><circle cx="16.500" cy="16.500" r="7.800" fill="#333" stroke="#999"/><path fill="none" stroke="#fff" stroke-width="1.600" d="m14.500 14 2.500-1.500V21"/></svg><i class="peek"></i></div>`;
document.querySelectorAll('.taskbar').forEach(bar => {
  bar.innerHTML = `<span class="mark" aria-hidden="true">WALLPAPERSWIDE.COM</span><div class="apps">${apps.map(a => {
    const [id, ...cls] = a.split(' ');
    return `<div class="ti ${cls.join(' ')}">${icon('t-' + id, 24)}</div>`;
  }).join('')}</div>${bar.dataset.tray === 'full' ? tray : `<div class="tray">${clock}</div>`}`;
});
```
FILE: styles.css
```css
* { box-sizing: border-box; }
body { margin: 0; width: 3840px; height: 1080px; overflow: hidden; display: flex; background: #fafafa; font: 11.5px/16px "Open Sans", "Noto Sans", sans-serif; color: #111; }
.defs { position: absolute; }
svg { display: block; flex: none; }
h1, h2, p, ul { margin: 0; font-weight: 400; }
button { font: inherit; padding: 0; display: flex; align-items: center; justify-content: center; }
.m { white-space: nowrap; }
.monitor { width: 1920px; height: 1080px; display: flex; flex-direction: column; position: relative; }

/* browser */
.browser { height: 1040px; background: #f9f9fa; display: flex; flex-direction: column; }
.tabstrip { height: 33px; background: #c6c6c6; display: flex; box-shadow: inset 0 -1px #8a8a8a; }
.tabs { width: 1710px; display: flex; }
.tab { width: 155.45px; height: 33px; display: flex; align-items: center; gap: 6px; padding: 1px 0 0 9px; border-right: 1px solid #9a9a9a; color: #4a4a4a; }
.tab .label { width: 97px; overflow: hidden; -webkit-mask-image: linear-gradient(90deg, #000 70%, transparent); mask-image: linear-gradient(90deg, #000 70%, transparent); font-size: 11.5px; }
.tab.current { background: #f9f9fa; border-top: 2px solid #0a84ff; padding-top: 0; }
.plus { width: 32px; display: flex; align-items: center; justify-content: center; }
.winctl { margin-left: auto; display: flex; gap: 34px; align-items: center; }
.winctl.dark { margin-right: 17px; }
.navbar { height: 38px; display: flex; align-items: center; margin-top: 1px; }
.navbtns { width: 246px; margin-left: 4px; display: flex; align-items: center; gap: 16px; }
.navbtns svg:nth-child(2) { margin-left: -8px; }
.urlbar { width: 1074px; height: 30px; border: 1px solid #b5b5b5; border-radius: 2px; background: #fff; display: flex; align-items: center; padding: 0 6px 0 8px; gap: 11px; color: #777; }
.urlbar .url { flex: 1; font-size: 13.300px; margin-left: -2px; }
.url b { font-weight: 400; color: #111; }
.searchbar { width: 299px; height: 30px; margin-left: 10px; border: 1px solid #b5b5b5; border-radius: 2px; background: #fff; display: flex; align-items: center; gap: 7px; padding-left: 8px; font-size: 13.500px; color: #777; }
.toolicons { margin-left: auto; margin-right: 9px; display: flex; align-items: center; gap: 16px; }
.toolicons .burger { margin-left: -5px; }
.bookmarks { height: 21px; border-bottom: 1px solid #dedede; display: grid; align-items: center; grid-template-columns: 58px 60px 63px 79px 88px 89.5px 89px 86.5px 84px 86px 105px 114px 100px 72px 96px 138.500px 109px 81px 89px 110px; padding: 0 0 2px 12px; color: #111; }
.bookmarks div { display: flex; gap: 4px; align-items: center; white-space: nowrap; }
.page { display: flex; gap: 22px; padding: 313px 0 0 494px; }
.error { width: 776px; display: flex; flex-direction: column; font-size: 14.250px; line-height: 21px; }
.error h1 { font-size: 30.400px; line-height: 44px; font-weight: 300; }
.error p { margin-top: 28px; }
.error ul { margin-top: 14px; padding: 0; list-style: none; }
.error li { padding-left: 30px; background: radial-gradient(circle at 19px 10px, #111 3.200px, transparent 3.800px) no-repeat; }
.error li + li { margin-top: 6px; }
.learn { margin-top: 15px; color: #0a8dff; }
.report { margin-top: 14px; display: flex; align-items: center; gap: 10px; }
.report i { width: 23px; height: 23px; border: 1px solid #c5c5c5; border-radius: 2px; background: #fff; }
.again { margin: 36px 0 0 auto; width: 110px; height: 30px; border: 0; background: #0a84ff; color: #fff; }

/* assertion dialog */
.assert { position: absolute; left: 1580px; top: 650px; width: 330px; height: 327px; border: 1px solid #c2c4c9; background: #ecedf2; display: flex; flex-direction: column; color: #adadad; font-size: 11.5px; }
.assert header { height: 20px; background: #c5cbd7; color: #fff; display: flex; align-items: center; padding: 0 5px 0 3px; gap: 9px; font-weight: 600; }
.assert header .m { flex: 1; }
.atools { height: 33px; display: flex; align-items: center; padding-left: 7px; }
.atools .chk { margin: 0 5px 0 10px; }
.atools .sep { width: 1px; height: 26px; background: #c9ccd6; margin: 0 8px; }
.atools .mv { margin-left: 6px; }
.atools .mv + .sep { margin: 0 8px 0 5px; }
.abody { flex: 1; display: flex; min-height: 0; }
.side { width: 26px; display: flex; align-items: flex-end; justify-content: center; padding-bottom: 84px; color: #b4b5ba; }
.side span { writing-mode: vertical-rl; transform: rotate(180deg); white-space: nowrap; }
.grid { flex: 1; background: #fcfcfc; display: flex; flex-direction: column; min-height: 0; }
.ghead { height: 21px; border-bottom: 1px solid #ececec; display: flex; line-height: 20px; }
.gi { width: 25px; display: flex; align-items: center; justify-content: center; border-right: 1px solid #ececec; }
.gp { width: 105px; padding-left: 2px; border-right: 1px solid #ececec; }
.gv { width: 58px; padding-left: 2px; border-right: 1px solid #ececec; }
.gbody { flex: 1; display: flex; min-height: 0; }
.grows { flex: 1; padding: 2px 1px 0; overflow: hidden; }
.grows > div { height: 19px; line-height: 18px; display: flex; padding-left: 32px; white-space: nowrap; }
.grows span:first-child { width: 104px; }
.grows .cat { padding-left: 7px; gap: 8px; align-items: center; }
.grows .cat i { width: 0; height: 0; border-left: 7px solid transparent; border-bottom: 7px solid #aaa; margin-right: -1px; }
.grows .cat:first-child { height: 20px; }
.grows .sel { height: 18px; margin-bottom: 1px; line-height: 16px; background: #bcdcfc; border: 1px solid #f0e2b4; color: #fff; padding-left: 31px; font-weight: 600; }
.scroll { width: 17px; background: #f7f7f7; display: flex; flex-direction: column; align-items: center; padding: 7px 0 5px; }
.scroll i { width: 17px; height: 97px; background: #ebebeb; margin: 4px 0 auto; }
.assert footer { height: 23px; display: flex; align-items: center; gap: 6px; padding-left: 4px; font-size: 11.400px; }

/* test builder */
.builder { position: absolute; left: 1685px; top: 978px; width: 224px; height: 61px; border: 2px solid #9aa6ba; background: #d0d6e6; padding: 1px 4px 0 7px; }
.builder header { display: flex; align-items: center; height: 20px; gap: 9px; }
.builder header .m { flex: 1; }
.btools { display: flex; align-items: center; height: 34px; padding-left: 13px; }
.btools .steps { margin: 0 12px 0 20px; }
.btools .sep { width: 1px; height: 31px; background: #8e98ac; }
.btools .on { width: 32px; height: 32px; margin: 0 2px 0 4px; border: 1px solid #e5c365; background: #fdf4bf; display: flex; align-items: center; justify-content: center; }
.btools .gen { margin-left: 10px; }

/* taskbar */
.taskbar { height: 40px; background: linear-gradient(90deg, #1d2125 0, #252624 240px, #272724 60%, #222422 80%); position: relative; display: flex; color: #fff; }
.mark { position: absolute; left: 1568px; right: 0; top: 16px; height: 24px; overflow: hidden; padding-left: 13px; background: #303030; color: #232323; font: 11px/24px "DejaVu Sans", sans-serif; letter-spacing: 11.500px; white-space: nowrap; }
.apps { display: flex; }
.ti { width: 49px; height: 40px; display: flex; align-items: center; justify-content: center; position: relative; }
.ti.run { background: linear-gradient(#b5b3b0, #b5b3b0) 50% 100% / 40px 2px no-repeat; }
.ti.many { background: linear-gradient(90deg, #b5b3b0 32px, #777 32px) 50% 100% / 40px 2px no-repeat; }
.ti.active { background: linear-gradient(#b5b3b0, #b5b3b0) 50% 100% / 48px 2px no-repeat, #3b3b38; }
.l1 { --l: #ffcb12; } .l2 { --r: #3fae74; } .l3 { --t: #3f68b5; }
.tray { margin-left: auto; display: flex; align-items: center; position: relative; }
.clock { width: 64px; display: flex; flex-direction: column; align-items: center; line-height: 18px; font-size: 11px; }
.up { margin: 0 16px 0 20px; } .net { margin: 0 8px; } .lang { margin: 0 7px 0 9px; }
.note { margin: 4px 11px 0 12px; }
.peek { width: 1px; height: 40px; background: #777; margin-right: 4px; }

/* technical utility */
.app { height: 1040px; display: flex; flex-direction: column; background: #fbfbfb; }
.apptitle { height: 23px; background: #4b4a48; color: #fff; display: flex; align-items: center; gap: 6px; padding: 0 19px 0 1px; }
.apphead { height: 56px; background: #6aa0ea; color: #fff; display: flex; padding: 0 5px; }
.apphead h1 { font-size: 30px; line-height: 50px; }
.right { margin-left: auto; display: flex; align-items: center; }
.right > svg { margin: -4px 2px 0 0; }
.help { font-size: 26px; margin: -4px 29px 0 44px; line-height: 40px; font-weight: 700; }
.bar { width: 1px; height: 43px; background: #fff; margin: -2px 4px 0 0; }
.user { width: 177px; height: 56px; background: #436fbd; display: flex; align-items: center; justify-content: space-between; padding: 0 4px 0 6px; font-size: 24px; }
.user .m { margin-top: -9px; }
h2 { font-size: 22.500px; line-height: 32px; padding: 10px 0 0 8px; color: #555; }
.actions { margin-top: 11px; height: 43px; padding: 0 158px 0 5px; display: flex; align-items: center; font-size: 14.700px; color: #ccc; }
.actions button { height: 40px; border: 1px solid #ccc; border-radius: 4px; background: #fff; color: #c8c8c8; }
.actions .new { width: 102px; height: 42px; border: 2px solid #9dadbf; color: #9aa9c0; }
.actions .edit { width: 100px; margin: 0 12px; }
.actions .reset { width: 190px; }
.filter { margin-left: auto; width: 190px; height: 40px; border: 1px solid #777; background: #fff; color: #111; padding: 9px 0 0 5px; font-size: 13px; line-height: 20px; }
.users { margin-top: 4px; flex: 1; border: 1px solid #6a8fb8; background: #fff; display: flex; }
.gutter { width: 6px; border-right: 1px solid #d9dfe8; background: linear-gradient(#ececee 57px, #fbfbfb 57px); }
.rows { flex: 1; }
.row { height: 51px; border-bottom: 1px solid #dbe1ea; display: grid; grid-template-columns: 48px 175px 175px 175px 90px 150px 1fr; align-items: center; padding-left: 25px; font-size: 13px; color: #222; }
.row.hd { height: 57px; padding-top: 16px; border-bottom: 2px solid #d8e2ee; font-size: 14.500px; color: #777; }
.row.hd b { display: flex; align-items: center; gap: 8px; font-weight: 600; }
.box { width: 20px; height: 20px; border: 1px solid #a9b6c8; border-radius: 3px; background: #fff; }
.menu { position: absolute; left: 1665px; top: 80px; width: 250px; height: 79px; border: 2px solid #a0acbf; border-bottom-width: 1px; background: #fff; box-shadow: 2px -2px 1px #667a96; font-size: 15px; color: #222; }
.menu div { height: 36px; padding: 7px 0 0 15px; line-height: 24px; border-bottom: 2px solid #b4bdcd; }
.menu .off { color: #c8c8c8; height: 37px; }
.menu div:last-child { border: 0; }
```
